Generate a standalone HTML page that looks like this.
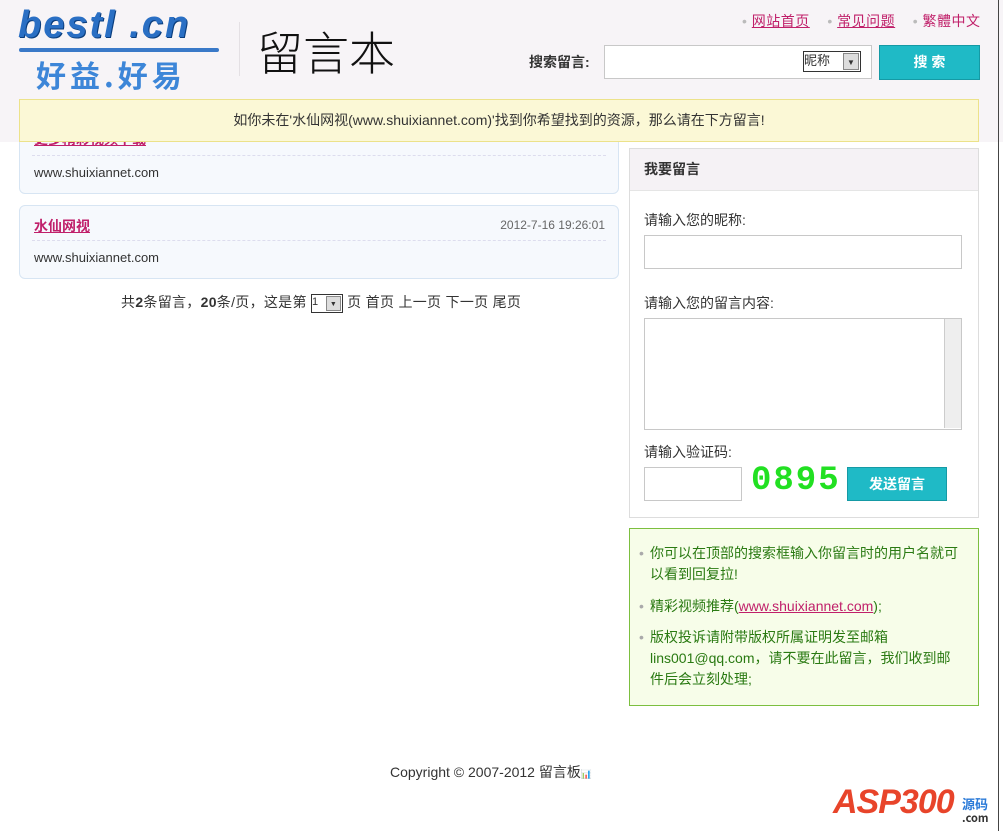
<!DOCTYPE html>
<html><head><meta charset="utf-8"><style>
body{margin:0;width:1003px;height:831px;background:#fff;font-family:"Liberation Sans","Noto Sans CJK SC",sans-serif;font-size:13px;color:#333;position:relative;overflow:hidden}
.a{position:absolute}
a{color:#c0206a;text-decoration:underline}
.msg{position:absolute;left:19px;width:598px;background:#f6f9fd;border:1px solid #d7e5f3;border-radius:6px}
.msg .t{position:absolute;left:14px;top:10px;font-weight:bold;color:#c0206a;text-decoration:underline;font-size:14px}
.msg .d{position:absolute;right:13px;top:12px;font-size:12px;color:#666}
.msg .l{position:absolute;left:12px;right:12px;top:34px;border-top:1px dashed #dde}
.msg .c{position:absolute;left:14px;top:44px}
.inp{position:absolute;background:#fff;border:1px solid #c8c8c8}
</style></head><body>
<div class="a" style="left:0;top:0;width:1003px;height:142px;background:#f7f4f7"></div>
<div class="a" style="left:18px;top:4px;font:bold italic 38px 'Liberation Sans',sans-serif;color:#2a6fc4;letter-spacing:2px;text-shadow:1px 1px 0 #0a3d7d">bestl .cn</div>
<div class="a" style="left:19px;top:48px;width:200px;height:4px;background:#3a79c8;border-radius:2px"></div>
<div class="a" style="left:36px;top:52px;font:bold 30px 'Noto Sans CJK SC',sans-serif;color:#3d86d8;letter-spacing:4px">好益.好易</div>
<div class="a" style="left:239px;top:22px;width:1px;height:54px;background:#e4e0e4"></div>
<div class="a" style="left:257px;top:18px;font:300 46px 'Noto Sans CJK SC',sans-serif;color:#111">留言本</div>
<div class="a" style="left:742px;top:11px;font-size:14px;color:#bbb;letter-spacing:0.5px">• <a>网站首页</a> &nbsp;&nbsp; • <a>常见问题</a> &nbsp;&nbsp; • <span style="color:#c0206a">繁體中文</span></div>
<div class="a" style="left:529px;top:52px;font-weight:bold;font-size:14px">搜索留言:</div>
<div class="inp" style="left:604px;top:45px;width:266px;height:32px"></div>
<div class="a" style="left:803px;top:51px;width:56px;height:19px;border:1px solid #333;background:#fff;font-size:13px;line-height:17px">昵称<span style="position:absolute;right:1px;top:1px;width:14px;height:15px;background:#ddd;border:1px solid #888;font-size:8px;text-align:center">▼</span></div>
<div class="a" style="left:879px;top:45px;width:99px;height:33px;background:#1fbac6;border:1px solid #159aa5;color:#fff;font-weight:bold;font-size:14px;line-height:33px;text-align:center">搜 索</div>
<div class="msg" style="top:120px;height:72px"><div class="t" style="top:8px;clip-path:inset(8px 0 0 0)">更多精彩视频下载</div><div class="l"></div><div class="c" style="top:44px">www.shuixiannet.com</div></div>
<div class="msg" style="top:205px;height:72px"><div class="t">水仙网视</div><div class="d">2012-7-16 19:26:01</div><div class="l"></div><div class="c">www.shuixiannet.com</div></div>
<div class="a" style="left:19px;top:99px;width:958px;height:41px;background:#fbf8d6;border:1px solid #ece28a;text-align:center;line-height:41px;font-size:14px">如你未在'水仙网视(www.shuixiannet.com)'找到你希望找到的资源，那么请在下方留言!</div>
<div class="a" style="left:121px;top:292px;font-size:14px;letter-spacing:0.3px">共<b>2</b>条留言，<b>20</b>条/页，这是第 <span style="display:inline-block;width:30px;height:17px;border:1px solid #333;vertical-align:middle;font-size:11px;line-height:15px;position:relative">1<span style="position:absolute;right:1px;top:1px;width:13px;height:13px;background:#ddd;border:1px solid #888;font-size:7px;text-align:center">▼</span></span> 页 首页 上一页 下一页 尾页</div>
<div class="a" style="left:629px;top:148px;width:348px;height:368px;border:1px solid #ddd;background:#fff"></div>
<div class="a" style="left:630px;top:149px;width:348px;height:41px;background:#f5f2f5;border-bottom:1px solid #e5e5e5;font-weight:bold;font-size:14px;line-height:40px;text-indent:14px">我要留言</div>
<div class="a" style="left:644px;top:210px;font-size:14px">请输入您的昵称:</div>
<div class="inp" style="left:644px;top:235px;width:316px;height:32px"></div>
<div class="a" style="left:644px;top:293px;font-size:14px">请输入您的留言内容:</div>
<div class="inp" style="left:644px;top:318px;width:316px;height:110px"></div>
<div class="a" style="left:944px;top:319px;width:16px;height:109px;background:#eee;border-left:1px solid #ccc"></div>
<div class="a" style="left:644px;top:442px;font-size:14px">请输入验证码:</div>
<div class="inp" style="left:644px;top:467px;width:96px;height:32px"></div>
<div class="a" style="left:751px;top:462px;font:bold 34px 'Liberation Mono',monospace;color:#22e022;letter-spacing:2px">0895</div>
<div class="a" style="left:847px;top:467px;width:98px;height:32px;background:#1fbac6;border:1px solid #159aa5;color:#fff;font-weight:bold;font-size:14px;line-height:32px;text-align:center">发送留言</div>
<div class="a" style="left:629px;top:528px;width:348px;height:176px;border:1px solid #7cbf3f;background:#f7fde9;color:#2a7a12;font-size:14px;line-height:21px">
<div style="position:absolute;left:20px;top:14px;width:314px"><span style="position:absolute;left:-11px;color:#aaa">•</span>你可以在顶部的搜索框输入你留言时的用户名就可以看到回复拉!</div>
<div style="position:absolute;left:20px;top:67px;width:314px"><span style="position:absolute;left:-11px;color:#aaa">•</span>精彩视频推荐(<a>www.shuixiannet.com</a>);</div>
<div style="position:absolute;left:20px;top:98px;width:314px"><span style="position:absolute;left:-11px;color:#aaa">•</span>版权投诉请附带版权所属证明发至邮箱lins001@qq.com，请不要在此留言，我们收到邮件后会立刻处理;</div>
</div>
<div class="a" style="left:390px;top:762px;font-size:14px">Copyright © 2007-2012 留言板<span style="font-size:9px;color:#888">📊</span></div>
<div class="a" style="left:833px;top:783px;font:bold italic 34px 'Liberation Sans',sans-serif;color:#e8442a;letter-spacing:-1px">ASP300</div>
<div class="a" style="left:962px;top:797px;font:bold 13px 'Noto Sans CJK SC',sans-serif;color:#2a7ad8;line-height:13px">源码<br><span style="color:#333;font-size:11px">.com</span></div>
<div class="a" style="left:998px;top:0;width:1px;height:831px;background:#444"></div>
</body></html>
